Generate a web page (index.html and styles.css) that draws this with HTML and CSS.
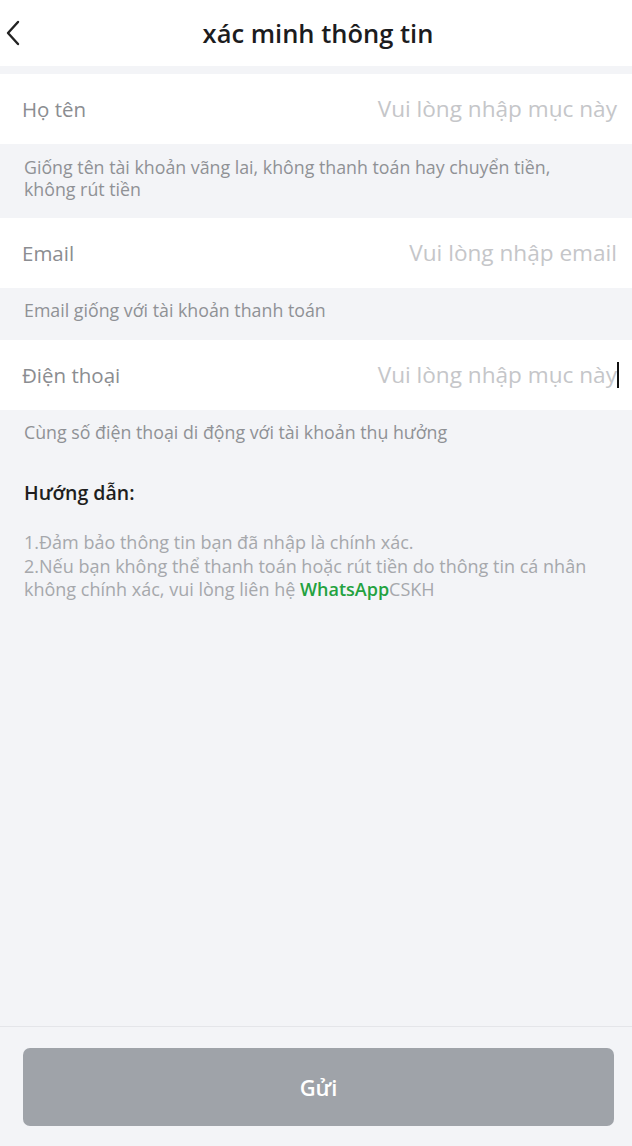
FILE: index.html
```html
<!DOCTYPE html>
<html lang="vi">
<head>
<meta charset="utf-8">
<link rel="stylesheet" href="styles.css">
</head>
<body>
<div class="page">
  <header class="topbar">
    <svg class="back" width="16" height="28" viewBox="0 0 16 28"><path d="M13 3 L3 14 L13 25" fill="none" stroke="#222" stroke-width="2.4" stroke-linecap="round" stroke-linejoin="round"/></svg>
    <h1 class="title">xác minh thông tin</h1>
  </header>
  <div class="spacer"></div>
  <div class="field">
    <span class="label">Họ tên</span>
    <span class="placeholder">Vui lòng nhập mục này</span>
  </div>
  <p class="hint hint-tall">Giống tên tài khoản vãng lai, không thanh toán hay chuyển tiền, không rút tiền</p>
  <div class="field">
    <span class="label">Email</span>
    <span class="placeholder">Vui lòng nhập email</span>
  </div>
  <p class="hint">Email giống với tài khoản thanh toán</p>
  <div class="field">
    <span class="label">Điện thoại</span>
    <span class="placeholder caret">Vui lòng nhập mục này</span>
  </div>
  <p class="hint">Cùng số điện thoại di động với tài khoản thụ hưởng</p>
  <section class="guide">
    <h2 class="guide-title">Hướng dẫn:</h2>
    <p class="guide-text">1.Đảm bảo thông tin bạn đã nhập là chính xác.<br>2.Nếu bạn không thể thanh toán hoặc rút tiền do thông tin cá nhân không chính xác, vui lòng liên hệ <span class="green">WhatsApp</span>CSKH</p>
  </section>
  <footer class="bottom">
    <button class="submit">Gửi</button>
  </footer>
</div>
</body>
</html>
```
FILE: styles.css
```css
* { box-sizing: border-box; }
html, body { margin: 0; padding: 0; }
body {
  background: #f3f4f7;
  font-family: "Open Sans", "Noto Sans", sans-serif;
  width: 632px;
  height: 1146px;
  overflow: hidden;
}
.page {
  display: flex;
  flex-direction: column;
  height: 1146px;
}
.topbar {
  position: relative;
  height: 66px;
  background: #fff;
  display: flex;
  align-items: center;
  justify-content: center;
}
.back {
  position: absolute;
  left: 5px;
  top: 19px;
}
.title {
  margin: 0;
  font-size: 25.5px;
  line-height: 30px;
  font-weight: 600;
  color: #1c1c1e;
  transform: translateX(2px);
}
.spacer { height: 8px; }
.field {
  height: 70px;
  background: #fff;
  display: flex;
  align-items: center;
  justify-content: space-between;
  padding: 0 15px 0 22px;
}
.label {
  font-size: 20.5px;
  line-height: 26px;
  color: #8b8d91;
}
.placeholder {
  font-size: 22.6px;
  line-height: 28px;
  color: #c5c6c9;
  position: relative;
}
.caret::after {
  content: "";
  position: absolute;
  right: -2px;
  top: 1px;
  width: 2px;
  height: 26px;
  background: #111;
}
.hint {
  margin: 0;
  padding: 11px 24px 0;
  height: 52px;
  font-size: 17.8px;
  line-height: 22px;
  color: #8f9195;
}
.hint-tall {
  height: 74px;
  padding-top: 12px;
  padding-right: 60px;
}
.guide {
  flex: 1;
  padding: 18px 24px 0;
}
.guide-title {
  margin: 0;
  font-size: 19.5px;
  line-height: 26px;
  font-weight: 600;
  color: #1e1e20;
}
.guide-text {
  margin: 25px 0 0;
  font-size: 18px;
  line-height: 23.5px;
  color: #a6a8ac;
  padding-right: 8px;
}
.green { color: #23a240; font-weight: 600; }
.bottom {
  height: 120px;
  border-top: 1px solid #e4e5e9;
  padding: 21px 18px 0 23px;
}
.submit {
  width: 591px;
  height: 78px;
  border: none;
  border-radius: 7px;
  background: #9fa3a9;
  color: #fff;
  font-family: "Open Sans", "Noto Sans", sans-serif;
  font-size: 22px;
  font-weight: 600;
}
```
